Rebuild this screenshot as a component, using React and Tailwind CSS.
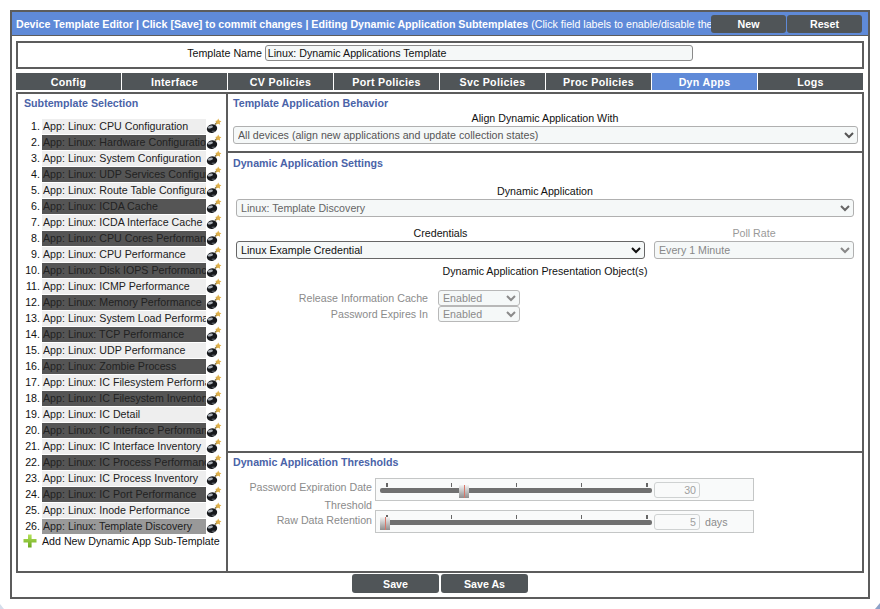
const apps = [
  ["CPU Configuration", 0], ["Hardware Configuration", 1], ["System Configuration", 0], ["UDP Services Configuration", 1],
  ["Route Table Configuration", 0], ["ICDA Cache", 1], ["ICDA Interface Cache", 0], ["CPU Cores Performance", 1],
  ["CPU Performance", 0], ["Disk IOPS Performance", 1], ["ICMP Performance", 0], ["Memory Performance", 1],
  ["System Load Performance", 0], ["TCP Performance", 1], ["UDP Performance", 0], ["Zombie Process", 1],
  ["IC Filesystem Performance", 0], ["IC Filesystem Inventory", 1], ["IC Detail", 0], ["IC Interface Performance", 1],
  ["IC Interface Inventory", 0], ["IC Process Performance", 1], ["IC Process Inventory", 0], ["IC Port Performance", 1],
  ["Inode Performance", 0], ["Template Discovery", 2],
];
const tabs = ["Config", "Interface", "CV Policies", "Port Policies", "Svc Policies", "Proc Policies", "Dyn Apps", "Logs"];
const tickXs = [10, 75, 140, 205, 270];

function Bomb() {
  return (
    <svg width="16" height="16" viewBox="0 0 16 16" className="shrink-0">
      <path d="M9 6.5 L11 4.5" stroke="#7a6a3a" strokeWidth="1.2" />
      <path d="M12.2 0.6 L13.2 2.6 L15.4 3.2 L13.8 4.6 L14.2 6.8 L12.2 5.7 L10.2 6.6 L10.6 4.4 L9.2 3 L11.3 2.6 Z" fill="#dfb04a" />
      <ellipse cx="6" cy="10.6" rx="5.2" ry="4.2" fill="#17191d" transform="rotate(-15 6 10.6)" />
      <ellipse cx="4.4" cy="9" rx="2.6" ry="1.4" fill="#a9afb6" transform="rotate(-15 4.4 9)" />
      <ellipse cx="7.5" cy="13.4" rx="2" ry="0.8" fill="#50555b" />
    </svg>
  );
}

function Heading({ children }) {
  return <div className="text-[10.67px] font-bold leading-[14px] text-[#4a63a8]">{children}</div>;
}

function Slider({ thumb, value, unit, top }) {
  return (
    <div className={`flex h-[23px] w-[379px] items-center border border-[#c4c6c6] bg-[#f9fafa] ${top}`}>
      <div className="relative h-full w-[278px] shrink-0">
        {tickXs.map((x, i) => (
          <div key={x} className={`absolute top-[4px] h-[4px] bg-[#666] ${i % 4 === 0 ? "w-[2px]" : "w-px"}`} style={{ left: x }} />
        ))}
        <div className="absolute left-[4px] top-[9px] h-[5px] w-[272px] rounded-[2px] bg-[#707070]" />
        <div
          className="absolute top-[6px] h-[13px] w-[10px] bg-gradient-to-b from-[#f4f4f4] to-[#8e8e8e]"
          style={{ left: thumb }}
        >
          <div className="mx-auto h-full w-px bg-[#d9776a]" />
        </div>
      </div>
      <div className="h-[16px] w-[46px] rounded-[3px] border border-[#cfd2d2] pr-[3px] text-right text-[10.67px] leading-[15px] text-[#a0a0a0]">
        {value}
      </div>
      {unit && <span className="ml-[5px] text-[10.67px] text-[#8b8b8b]">{unit}</span>}
    </div>
  );
}

const selectBase = "block rounded-[3px] border bg-[#f5f8f8] text-[10.67px] leading-[14px]";

export default function App() {
  return (
    <div className="relative h-[609px] w-[880px] overflow-hidden bg-white pl-[10px] pt-[10px] font-['Liberation_Sans',Arial,sans-serif] text-[10.67px] text-[#111]">
      <div className="flex h-[589px] w-[860px] flex-col border-2 border-[#5c5c5c]">
        <div className="flex h-[24px] shrink-0 items-center overflow-hidden border-b border-[#5c5c5c] bg-[#5f8ad8] pl-[4px] pr-[6px]">
          <div className="min-w-0 flex-1 overflow-hidden whitespace-nowrap text-[10.67px] text-white">
            <span className="font-bold">Device Template Editor | Click [Save] to commit changes | Editing Dynamic Application Subtemplates </span>
            (Click field labels to enable/disable them)
          </div>
          <button className="h-[18px] w-[75px] rounded-[3px] bg-[#505558] text-[10.67px] font-bold text-white">New</button>
          <button className="ml-px h-[18px] w-[75px] rounded-[3px] bg-[#505558] text-[10.67px] font-bold text-white">Reset</button>
        </div>

        <div className="mx-[4px] mt-[5px] flex h-[28px] shrink-0 items-start justify-center gap-[3px] border-2 border-[#5c5c5c] pt-[2px]">
          <span className="leading-[16px]">Template Name</span>
          <input
            readOnly
            value="Linux: Dynamic Applications Template"
            className="h-[16px] w-[428px] rounded-[3px] border border-[#8a8a8a] bg-[#f5f8f8] px-[2px] text-[10.67px] text-[#111] outline-none"
          />
        </div>

        <div className="ml-[4px] mr-[5px] mt-[4px] flex h-[17px] shrink-0 gap-px">
          {tabs.map((t) => (
            <div
              key={t}
              className={`flex-1 text-center text-[10.67px] font-bold leading-[18px] tracking-[0.3px] text-white ${t === "Dyn Apps" ? "bg-[#5f8ad8]" : "bg-[#505558]"}`}
            >
              {t}
            </div>
          ))}
        </div>

        <div className="mx-[4px] mt-[2px] flex h-[481px] shrink-0 border-2 border-[#5c5c5c]">
          <div className="w-[210px] shrink-0 border-r-2 border-[#5c5c5c] pt-[2px]">
            <div className="pl-[6px]"><Heading>Subtemplate Selection</Heading></div>
            <div className="mt-[8px]">
              {apps.map(([name, kind], i) => (
                <div key={name} className="flex h-[16px] items-center">
                  <span className="ml-[3px] w-[19px] shrink-0 pb-[1px] text-right">{i + 1}.</span>
                  <div
                    className={`ml-[2px] h-[15px] w-[164px] shrink-0 overflow-hidden whitespace-nowrap pl-[1px] leading-[15px] ${
                      kind === 0 ? "bg-[#eeeeee] text-[#222]" : kind === 1 ? "bg-[#555555] text-[#222]" : "bg-[#999999] text-[#222]"
                    }`}
                  >
                    App: Linux: {name}
                  </div>
                  <Bomb />
                </div>
              ))}
            </div>
            <div className="mt-[-1px] flex h-[15px] items-center pl-[5px]">
              <svg width="14" height="14" viewBox="0 0 14 14" className="mr-[5px] shrink-0">
                <defs>
                  <linearGradient id="plusFill" x1="0" y1="0" x2="0" y2="1">
                    <stop offset="0" stopColor="#b5e35a" />
                    <stop offset="1" stopColor="#6aa81f" />
                  </linearGradient>
                </defs>
                <path d="M5 0.5h3.6v4.4H13.5v3.6H8.6v5H5v-5H0.5V4.9H5z" fill="url(#plusFill)" />
              </svg>
              <span className="whitespace-nowrap">Add New Dynamic App Sub-Template</span>
            </div>
          </div>

          <div className="flex min-w-0 flex-1 flex-col">
            <div className="h-[59px] shrink-0 border-b-2 border-[#5c5c5c] px-[5px] pt-[2px]">
              <Heading>Template Application Behavior</Heading>
              <div className="mt-[2px] text-center leading-[13px]">Align Dynamic Application With</div>
              <select disabled className={`${selectBase} mt-[1px] h-[18px] w-[625px] border-[#b0b0b0] text-[#555] opacity-100`}>
                <option>All devices (align new applications and update collection states)</option>
              </select>
            </div>

            <div className="h-[300px] shrink-0 border-b-2 border-[#5c5c5c] px-[5px] pt-[3px]">
              <Heading>Dynamic Application Settings</Heading>
              <div className="mt-[15px] text-center leading-[13px]">Dynamic Application</div>
              <select disabled className={`${selectBase} ml-[3px] mt-[1px] h-[18px] w-[618px] border-[#b0b0b0] text-[#666] opacity-100`}>
                <option>Linux: Template Discovery</option>
              </select>
              <div className="ml-[3px] mt-[10px] flex gap-[9px]">
                <div className="w-[409px]">
                  <div className="text-center leading-[13px]">Credentials</div>
                  <select className={`${selectBase} mt-[1px] h-[18px] w-full border-[#666] text-[#111]`}>
                    <option>Linux Example Credential</option>
                  </select>
                </div>
                <div className="w-[200px]">
                  <div className="text-center leading-[13px] text-[#999]">Poll Rate</div>
                  <select disabled className={`${selectBase} mt-[1px] h-[18px] w-full border-[#b0b0b0] text-[#888] opacity-100`}>
                    <option>Every 1 Minute</option>
                  </select>
                </div>
              </div>
              <div className="mt-[6px] text-center leading-[13px]">Dynamic Application Presentation Object(s)</div>
              <div className="mt-[12px] flex h-[16px] items-center">
                <span className="w-[195px] text-right text-[#8b8b8b]">Release Information Cache</span>
                <select disabled className={`${selectBase} ml-[10px] h-[16px] w-[82px] border-[#b8b8b8] text-[#8b8b8b] opacity-100`}>
                  <option>Enabled</option>
                </select>
              </div>
              <div className="flex h-[16px] items-center">
                <span className="w-[195px] text-right text-[#8b8b8b]">Password Expires In</span>
                <select disabled className={`${selectBase} ml-[10px] h-[16px] w-[82px] border-[#b8b8b8] text-[#8b8b8b] opacity-100`}>
                  <option>Enabled</option>
                </select>
              </div>
            </div>

            <div className="min-h-0 flex-1 pl-[5px] pt-[2px]">
              <Heading>Dynamic Application Thresholds</Heading>
              <div className="mt-[9px] flex items-start">
                <div className="w-[139px] shrink-0 text-right leading-[13px] text-[#8b8b8b]">
                  <div className="mt-[3px]">Password Expiration Date</div>
                  <div className="mt-[5px]">Threshold</div>
                  <div className="mt-[2px]">Raw Data Retention</div>
                </div>
                <div className="ml-[3px]">
                  <Slider thumb={83} value="30" top="" />
                  <Slider thumb={4} value="5" unit="days" top="mt-[9px]" />
                </div>
              </div>
            </div>
          </div>
        </div>

        <div className="mt-px flex gap-[2px] pl-[340px]">
          <button className="h-[19px] w-[87px] rounded-[3px] bg-[#505558] text-[10.67px] font-bold text-white">Save</button>
          <button className="h-[19px] w-[87px] rounded-[3px] bg-[#505558] text-[10.67px] font-bold text-white">Save As</button>
        </div>
      </div>
      <svg width="5" height="6" viewBox="0 0 5 6" className="absolute bottom-0 right-0">
        <path d="M5 0 V6 H0 Z" fill="#8ea2c8" />
      </svg>
      <svg width="4" height="5" viewBox="0 0 4 5" className="absolute bottom-0 left-0">
        <path d="M0 0 L4 5 H0 Z" fill="#d5deec" />
      </svg>
    </div>
  );
}
